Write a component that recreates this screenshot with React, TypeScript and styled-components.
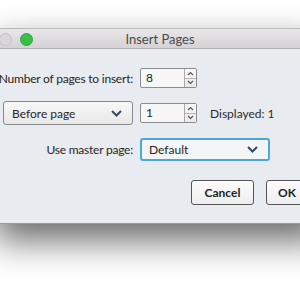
import React from 'react';
import styled, { createGlobalStyle } from 'styled-components';

const GlobalStyle = createGlobalStyle`
  html, body {
    margin: 0;
    padding: 0;
    background: #ffffff;
    overflow: hidden;
  }
  body {
    font-family: Lato, "Open Sans", sans-serif;
    font-size: 12px;
    color: #2b2b2b;
  }
`;

const Stage = styled.div`
  width: 300px;
  height: 300px;
  overflow: hidden;
  padding-top: 28px;
  box-sizing: border-box;
`;

const Window = styled.div`
  width: 330px;
  margin-left: -5px;
  border-top: 1px solid #b9b9b9;
  border-bottom: 1px solid #9a9a9a;
  box-shadow: 0 16px 34px rgba(0, 0, 0, 0.6);
`;

const TitleBar = styled.div`
  position: relative;
  height: 20px;
  display: flex;
  align-items: center;
  justify-content: center;
  padding-top: 1px;
  box-sizing: border-box;
  background: linear-gradient(#e9e7e9, #d4d2d4);
  border-bottom: 1px solid #b3b1b3;
  color: #4a4a4a;
  font-size: 13px;
`;

const Lights = styled.div`
  position: absolute;
  left: 4px;
  top: 4px;
  display: flex;
  gap: 8px;
`;

const Light = styled.span<{ $color: string; $border: string }>`
  width: 11px;
  height: 11px;
  border-radius: 50%;
  background: ${(p) => p.$color};
  border: 1px solid ${(p) => p.$border};
`;

const Body = styled.div`
  background: #e8ebef;
  padding: 19px 0 18px 8px;
`;

const Form = styled.div`
  display: grid;
  grid-template-columns: 130px auto;
  column-gap: 7px;
  row-gap: 13px;
  align-items: center;
`;

const Label = styled.div`
  justify-self: end;
  white-space: nowrap;
  letter-spacing: -0.22px;
  color: #262626;
`;

const Inline = styled.div`
  display: flex;
  align-items: center;
  gap: 13px;
`;

const Spin = styled.div`
  display: flex;
  height: 20px;
  width: 57px;
  box-sizing: border-box;
  border: 1px solid #8d8d8d;
  border-radius: 2px;
  background: #f7f7f7;
`;

const SpinValue = styled.div`
  flex: 1;
  padding-left: 5px;
  line-height: 18px;
  color: #222;
`;

const Stepper = styled.div`
  width: 11px;
  border-left: 1px solid #a9a9a9;
  display: flex;
  flex-direction: column;
  background: linear-gradient(#fafafa, #e9e9e9);
`;

const StepHalf = styled.div<{ $top?: boolean }>`
  flex: 1;
  display: flex;
  align-items: center;
  justify-content: center;
  border-bottom: ${(p) => (p.$top ? '1px solid #b5b5b5' : 'none')};
`;

const Select = styled.div<{ $width: number; $focus?: boolean }>`
  width: ${(p) => p.$width}px;
  height: ${(p) => (p.$focus ? 23 : 24)}px;
  box-sizing: border-box;
  display: flex;
  align-items: center;
  justify-content: space-between;
  padding: 0 10px 0 ${(p) => (p.$focus ? 7 : 8)}px;
  border: ${(p) => (p.$focus ? '2px solid #4aa8dc' : '1px solid #8a8a8a')};
  border-radius: 3px;
  background: ${(p) => (p.$focus ? '#f4f5f7' : 'linear-gradient(#f8f8f8, #e8e8e8)')};
  color: #262626;
`;

const Note = styled.span`
  color: #2b2b2b;
`;

const Buttons = styled.div`
  display: flex;
  justify-content: flex-start;
  gap: 12px;
  margin-top: 19px;
  padding-left: 188px;
`;

const Button = styled.button<{ $width: number }>`
  width: ${(p) => p.$width}px;
  height: 25px;
  border: 1px solid #555;
  border-radius: 3px;
  background: linear-gradient(#fbfbfb, #eeeeee);
  font-family: inherit;
  font-size: 12px;
  font-weight: 700;
  color: #1e1e1e;
  padding: 0;
`;

const Arrow = ({ up }: { up?: boolean }) => (
  <svg width="7" height="5" viewBox="0 0 7 5">
    <path
      d={up ? 'M1 4 L3.5 1.5 L6 4' : 'M1 1 L3.5 3.5 L6 1'}
      fill="none"
      stroke="#555"
      strokeWidth="1.2"
    />
  </svg>
);

const Chevron = () => (
  <svg width="11" height="7" viewBox="0 0 11 7">
    <path d="M1 1 L5.5 5.5 L10 1" fill="none" stroke="#34495e" strokeWidth="2" />
  </svg>
);

const Spinner = ({ value }: { value: string }) => (
  <Spin>
    <SpinValue>{value}</SpinValue>
    <Stepper>
      <StepHalf $top>
        <Arrow up />
      </StepHalf>
      <StepHalf>
        <Arrow />
      </StepHalf>
    </Stepper>
  </Spin>
);

export default function App() {
  return (
    <Stage>
      <GlobalStyle />
      <Window>
        <TitleBar>
          <Lights>
            <Light $color="#d9d7d9" $border="#c2c0c2" />
            <Light $color="#35c048" $border="#2aa63b" />
          </Lights>
          Insert Pages
        </TitleBar>
        <Body>
          <Form>
            <Label>Number of pages to insert:</Label>
            <Spinner value="8" />

            <Select $width={130}>
              <span>Before page</span>
              <Chevron />
            </Select>
            <Inline>
              <Spinner value="1" />
              <Note>Displayed: 1</Note>
            </Inline>

            <Label>Use master page:</Label>
            <Select $width={130} $focus>
              <span>Default</span>
              <Chevron />
            </Select>
          </Form>
          <Buttons>
            <Button $width={63}>Cancel</Button>
            <Button $width={42}>OK</Button>
          </Buttons>
        </Body>
      </Window>
    </Stage>
  );
}
